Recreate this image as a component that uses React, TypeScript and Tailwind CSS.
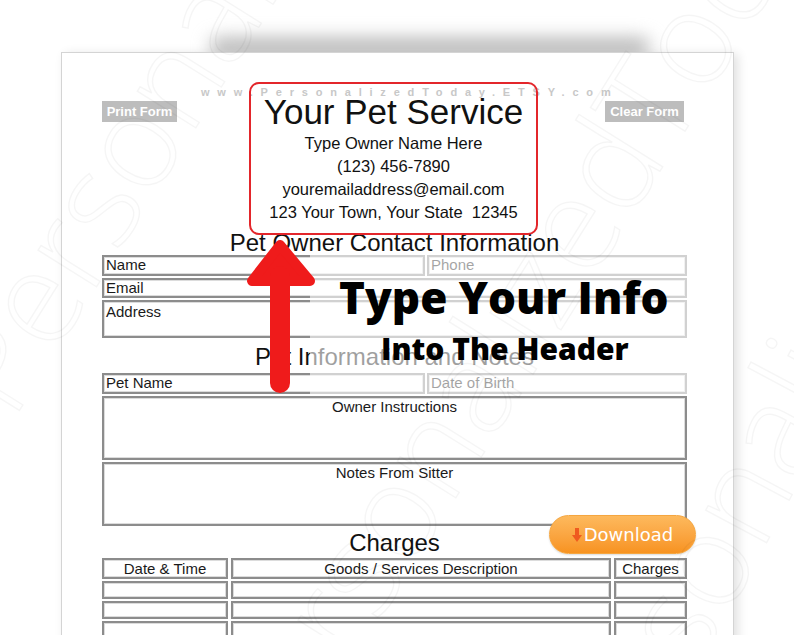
import React from 'react';

const field = 'border-2 border-[#8c8c8c] shadow-[inset_0_0_0_1px_#dcdcdc] bg-white';

function Field({ label, className = '', center = false }: { label: string; className?: string; center?: boolean }) {
  return (
    <div className={`${field} ${className} text-[15px] leading-[16px] text-[#1a1a1a] ${center ? 'text-center pt-[1px]' : 'pl-[2px]'}`}>
      {label}
    </div>
  );
}

function Arrow() {
  return (
    <svg width="74" height="162" viewBox="0 0 74 162" className="absolute left-[244px] top-[236px]">
      <polygon points="36,9 8,45 66,45" fill="#ef1b1b" stroke="#ef1b1b" strokeWidth="10" strokeLinejoin="round" />
      <line x1="36" y1="40" x2="36" y2="147" stroke="#ef1b1b" strokeWidth="20" strokeLinecap="round" />
    </svg>
  );
}

function Watermarks() {
  const cls =
    "absolute whitespace-nowrap font-['Open_Sans',sans-serif] font-light text-[130px] leading-none text-transparent [-webkit-text-stroke:1.5px_rgba(0,0,0,0.04)] origin-left";
  return (
    <div className="pointer-events-none absolute inset-0 overflow-hidden">
      <span className={`${cls} left-[-30px] top-[330px] -rotate-[58deg]`}>PersonalizedToday</span>
      <span className={`${cls} left-[230px] top-[700px] -rotate-[58deg]`}>PersonalizedToday</span>
      <span className={`${cls} left-[560px] top-[760px] -rotate-[62deg]`}>PersonalizedToday</span>
    </div>
  );
}

export default function App() {
  return (
    <div className="relative h-[635px] w-[794px] overflow-hidden bg-white font-['Liberation_Sans',Arial,sans-serif]">
      {/* page curl shadow */}
      <div className="absolute left-[210px] top-[38px] h-[18px] w-[440px] rounded-full bg-[#b4b4b4] blur-[9px]" />

      <div className="relative ml-[61px] mt-[52px] h-[620px] w-[673px] border border-[#d4d4d4] bg-white shadow-[4px_2px_10px_rgba(0,0,0,0.12)]">
        <div className="absolute left-[139px] top-[31px] whitespace-nowrap text-[11px] font-bold tracking-[0.71em] text-[#c8c8c8]">
          www.PersonalizedToday.ETSY.com
        </div>

        <div className="relative flex items-start pl-[40px] pt-[29px]">
          <div className="mt-[19px] flex h-[21px] w-[75px] items-center justify-center bg-[#bdbdbd] text-[13px] font-bold text-white">
            Print Form
          </div>
          <div className="ml-[72px] flex h-[153px] w-[289px] flex-col items-center rounded-[10px] border-2 border-[#e3262b] text-[#111]">
            <div className="mt-[10px] text-[35px] leading-[36px]">Your Pet Service</div>
            <div className="mt-[2px] text-[16.5px] leading-[23px]">Type Owner Name Here</div>
            <div className="text-[16.5px] leading-[23px]">(123) 456-7890</div>
            <div className="text-[16.5px] leading-[23px]">youremailaddress@email.com</div>
            <div className="whitespace-pre text-[16.5px] leading-[23px]">123 Your Town, Your State  12345</div>
          </div>
          <div className="ml-[67px] mt-[19px] flex h-[21px] w-[79px] items-center justify-center bg-[#bdbdbd] text-[13px] font-bold text-white">
            Clear Form
          </div>
        </div>

        <div className="ml-[40px] flex w-[585px] flex-col">
          <div className="-mt-[4px] text-center text-[24px] leading-[24px] text-[#111]">Pet Owner Contact Information</div>
          <div className="flex gap-[2px]">
            <Field label="Name" className="h-[21px] w-[323px]" />
            <Field label="Phone" className="h-[21px] flex-1" />
          </div>
          <Field label="Email" className="mt-[2px] h-[20px]" />
          <Field label="Address" className="mt-[2px] h-[38px] pt-[2px]" />

          <div className="mt-[7px] text-center text-[24px] leading-[24px] text-[#111]">Pet Information and Notes</div>
          <div className="mt-[4px] flex gap-[2px]">
            <Field label="Pet Name" className="h-[21px] w-[323px]" />
            <Field label="Date of Birth" className="h-[21px] flex-1" />
          </div>
          <Field label="Owner Instructions" center className="mt-[2px] h-[64px]" />
          <Field label="Notes From Sitter" center className="mt-[2px] h-[64px]" />

          <div className="mt-[5px] text-center text-[24px] leading-[24px] text-[#111]">Charges</div>
          <div className="mt-[3px] flex flex-col gap-[2px]">
            <div className="flex gap-[3px]">
              <Field label="Date & Time" center className="h-[21px] w-[126px]" />
              <Field label="Goods / Services Description" center className="h-[21px] flex-1" />
              <Field label="Charges" center className="h-[21px] w-[73px]" />
            </div>
            {[0, 1, 2].map((r) => (
              <div key={r} className="flex gap-[3px]">
                <Field label="" className="h-[18px] w-[126px]" />
                <Field label="" className="h-[18px] flex-1" />
                <Field label="" className="h-[18px] w-[73px]" />
              </div>
            ))}
          </div>
        </div>
      </div>

      {/* fade panel behind the call-out text */}
      <div className="absolute left-[310px] top-[253px] h-[142px] w-[392px] bg-white/60" />

      <Arrow />

      <div className="absolute left-[339px] top-[271px] whitespace-nowrap font-['Open_Sans',sans-serif] text-[44px] font-extrabold leading-[52px] text-black">
        Type Your Info
      </div>
      <div className="absolute left-[381px] top-[330px] whitespace-nowrap font-['Open_Sans',sans-serif] text-[30px] font-extrabold leading-[38px] text-black">
        Into The Header
      </div>

      <div className="absolute left-[549px] top-[515px] flex h-[39px] w-[147px] items-center justify-center rounded-[20px] border border-[#f5a640] bg-gradient-to-b from-[#fdb95c] to-[#f7931f] font-['DejaVu_Sans',sans-serif] text-[18px] text-white shadow-[0_1px_2px_rgba(0,0,0,0.15)]">
        <svg width="10" height="16" viewBox="0 0 10 16" className="mr-[2px]">
          <rect x="3" y="1" width="4" height="8" fill="#ef5a1f" />
          <polygon points="0,8 10,8 5,15" fill="#ef5a1f" />
        </svg>
        Download
      </div>

      <Watermarks />
    </div>
  );
}
